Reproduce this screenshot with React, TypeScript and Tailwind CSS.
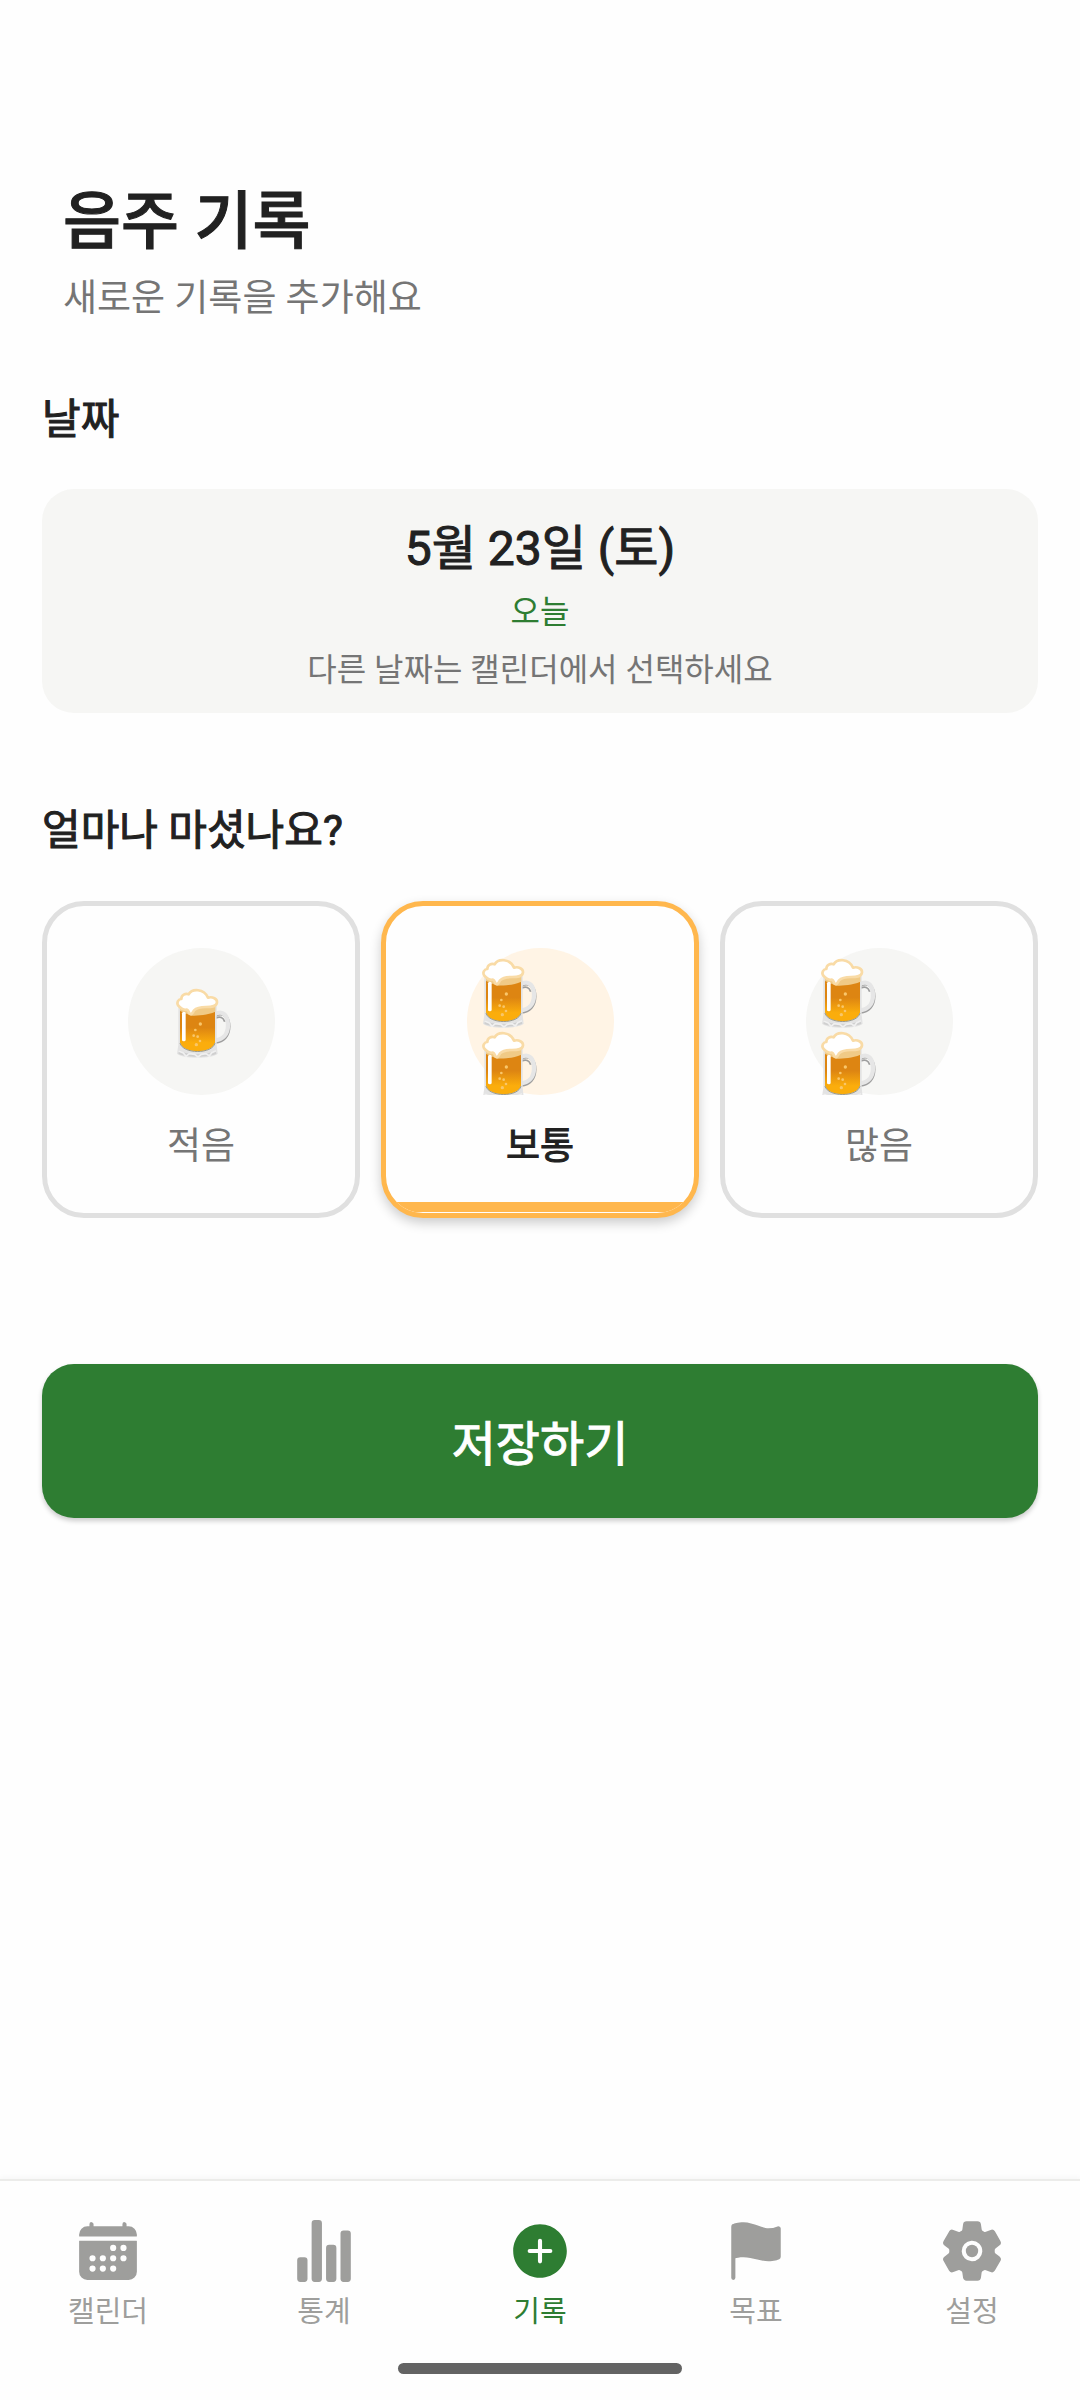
import { useState } from "react";
import {
  IoAddCircle,
  IoCalendar,
  IoFlag,
  IoSettings,
  IoStatsChart,
} from "react-icons/io5";

const amounts = [
  { id: "light", label: "적음", mugs: 1 },
  { id: "normal", label: "보통", mugs: 2 },
  { id: "heavy", label: "많음", mugs: 2 },
];

const tabs = [
  { label: "캘린더", href: "#calendar", Icon: IoCalendar },
  { label: "통계", href: "#stats", Icon: IoStatsChart },
  { label: "기록", href: "#record", Icon: IoAddCircle, active: true },
  { label: "목표", href: "#goal", Icon: IoFlag },
  { label: "설정", href: "#settings", Icon: IoSettings },
];

function BeerMug() {
  return (
    <svg
      viewBox="0 0 222 219"
      className="h-[73px] w-[74px] shrink-0"
      aria-hidden="true"
    >
      <defs>
        <linearGradient id="beer" x1="0" y1="0" x2="0" y2="1">
          <stop offset="0.45" stopColor="#dd8512" />
          <stop offset="0.8" stopColor="#fbad0c" />
        </linearGradient>
      </defs>
      {/* Handle */}
      <path
        d="M153 92 C180 78 195 98 195 124 C195 154 178 170 154 172"
        fill="none"
        stroke="#9e9e9e"
        strokeWidth="9"
      />
      <path
        d="M153 87 C178 74 192 94 192 120 C192 148 176 164 154 166"
        fill="none"
        stroke="#e6e6e6"
        strokeWidth="13"
      />
      <path
        d="M156 99 C168 93 178 98 182 110"
        fill="none"
        stroke="#9e9e9e"
        strokeWidth="5"
      />
      {/* Glass */}
      <path
        d="M43 62 H158 V180 L161 206 C145 222 56 222 39 206 L43 180 Z"
        fill="#e3e3e3"
      />
      <path
        d="M46 196 C68 212 132 212 154 196 L157 206 C136 218 64 218 43 206 Z"
        fill="#cfcfcf"
      />
      <path
        d="M44 198 L58 204 L66 214 L76 206 L92 208 L102 216 L112 208 L126 206 L136 213 L143 203 L156 197"
        fill="none"
        stroke="#f0f0f0"
        strokeWidth="5"
      />
      <path
        d="M48 70 H153 V172 C146 208 56 208 48 172 Z"
        fill="url(#beer)"
      />
      <path
        d="M48 174 C56 208 146 208 153 174"
        fill="none"
        stroke="#9a9a8c"
        strokeWidth="3"
      />
      <path d="M48 60 H154 V80 C130 90 104 92 82 92 L48 78 Z" fill="#f0ca86" />
      {/* Foam */}
      <path
        d="M43 62 C36 52 44 42 52 42 C52 30 64 24 74 28 C84 10 120 10 132 38 C146 34 160 42 159 52 C158 66 140 66 126 66 C108 66 96 70 90 76 C86 84 82 90 77 86 C74 82 74 76 69 74 C60 76 50 70 43 62 Z"
        fill="#ffffff"
        stroke="#f9dba6"
        strokeWidth="8"
        strokeLinejoin="round"
      />
      <rect x="54" y="80" width="11" height="89" rx="5" fill="#ffffff" />
      <g fill="#f9c66a">
        <circle cx="109" cy="117" r="5" />
        <circle cx="94" cy="135" r="4" />
        <circle cx="89" cy="152" r="4" />
        <circle cx="101" cy="155" r="4" />
        <circle cx="108" cy="168" r="4" />
        <circle cx="97" cy="179" r="5" />
      </g>
    </svg>
  );
}

export default function App() {
  const [amount, setAmount] = useState("normal");

  return (
    <div
      lang="ko"
      className="flex min-h-screen flex-col bg-[#fefefe] font-['Roboto','Noto_Sans_CJK_KR',sans-serif] text-[#212121]"
    >
      <main className="flex-1 px-[42px] pt-[176px]">
        {/* Header */}
        <header className="px-[21px]">
          <h1 className="text-[63px] leading-[92px] font-medium [-webkit-text-stroke:1px]">
            음주 기록
          </h1>
          <p className="mt-1 text-[37px] leading-[54px] text-[#757575]">
            새로운 기록을 추가해요
          </p>
        </header>

        {/* Date */}
        <section className="mt-[63px]">
          <h2 className="text-[42px] leading-[62px] [-webkit-text-stroke:1px]">
            날짜
          </h2>
          <div className="mt-[38px] flex flex-col items-center rounded-[32px] bg-[#f6f6f4] pt-[26px] pb-5 text-center text-[32px] leading-[46px]">
            <p className="text-[48px] leading-[68px] [-webkit-text-stroke:1px]">
              5월 23일 (토)
            </p>
            <p className="mt-1.5 text-[#2e7d32]">오늘</p>
            <p className="mt-3 text-[#757575]">
              다른 날짜는 캘린더에서 선택하세요
            </p>
          </div>
        </section>

        {/* Amount */}
        <fieldset className="mt-[87px]">
          <legend className="text-[42px] leading-[62px] [-webkit-text-stroke:1px]">
            얼마나 마셨나요?
          </legend>
          <div className="mt-[39px] grid grid-cols-3 gap-[21px]">
            {amounts.map(({ id, label, mugs }) => {
              const selected = amount === id;
              return (
                <label
                  key={id}
                  className={`relative flex cursor-pointer flex-col items-center overflow-hidden rounded-[42px] border-[5px] bg-[#fefefe] pt-[42px] pb-[39px] ${
                    selected
                      ? "border-[#ffb74d] shadow-[0_5px_12px_rgba(0,0,0,0.2)]"
                      : "border-[#e0e0e0]"
                  }`}
                >
                  <input
                    type="radio"
                    name="amount"
                    value={id}
                    checked={selected}
                    onChange={() => setAmount(id)}
                    className="sr-only"
                  />
                  <div
                    className={`size-[147px] rounded-full ${
                      selected ? "bg-[#fff4e5]" : "bg-[#f6f6f4]"
                    }`}
                  >
                    <div
                      className={`flex h-full flex-col overflow-hidden ${
                        mugs === 1
                          ? "items-center justify-center"
                          : "items-start pt-[7px] pl-[3px]"
                      }`}
                    >
                      {Array.from({ length: mugs }, (_, i) => (
                        <BeerMug key={i} />
                      ))}
                    </div>
                  </div>
                  <span
                    className={`mt-[25px] text-[37px] leading-[54px] ${
                      selected
                        ? "[-webkit-text-stroke:1px]"
                        : "text-[#757575]"
                    }`}
                  >
                    {label}
                  </span>
                  {selected && (
                    <span className="absolute inset-x-0 bottom-px h-[10px] bg-[#ffb74d]" />
                  )}
                </label>
              );
            })}
          </div>
        </fieldset>

        <button
          type="button"
          className="mt-[146px] w-full rounded-[32px] bg-[#2e7d32] pt-[46px] pb-[38px] text-[48px] leading-[70px] text-white shadow-[0_3px_5px_rgba(0,0,0,0.2)] [-webkit-text-stroke:1px]"
        >
          저장하기
        </button>
      </main>

      {/* Tab bar */}
      <nav className="border-t-2 border-[#ececea] bg-[#fefefe] pt-[37px] pb-[26px] shadow-[0_-2px_5px_rgba(0,0,0,0.03)]">
        <div className="grid grid-cols-5">
          {tabs.map(({ label, href, Icon, active }) => (
            <a
              key={label}
              href={href}
              aria-current={active ? "page" : undefined}
              className={`flex flex-col items-center gap-[7px] text-[29px] leading-[42px] ${
                active ? "text-[#2e7d32]" : "text-[#9e9e9c]"
              }`}
            >
              <Icon className="size-[66px]" />
              {label}
            </a>
          ))}
        </div>
        <div className="mx-auto mt-[30px] h-[11px] w-[284px] rounded-full bg-[#636363]" />
      </nav>
    </div>
  );
}
